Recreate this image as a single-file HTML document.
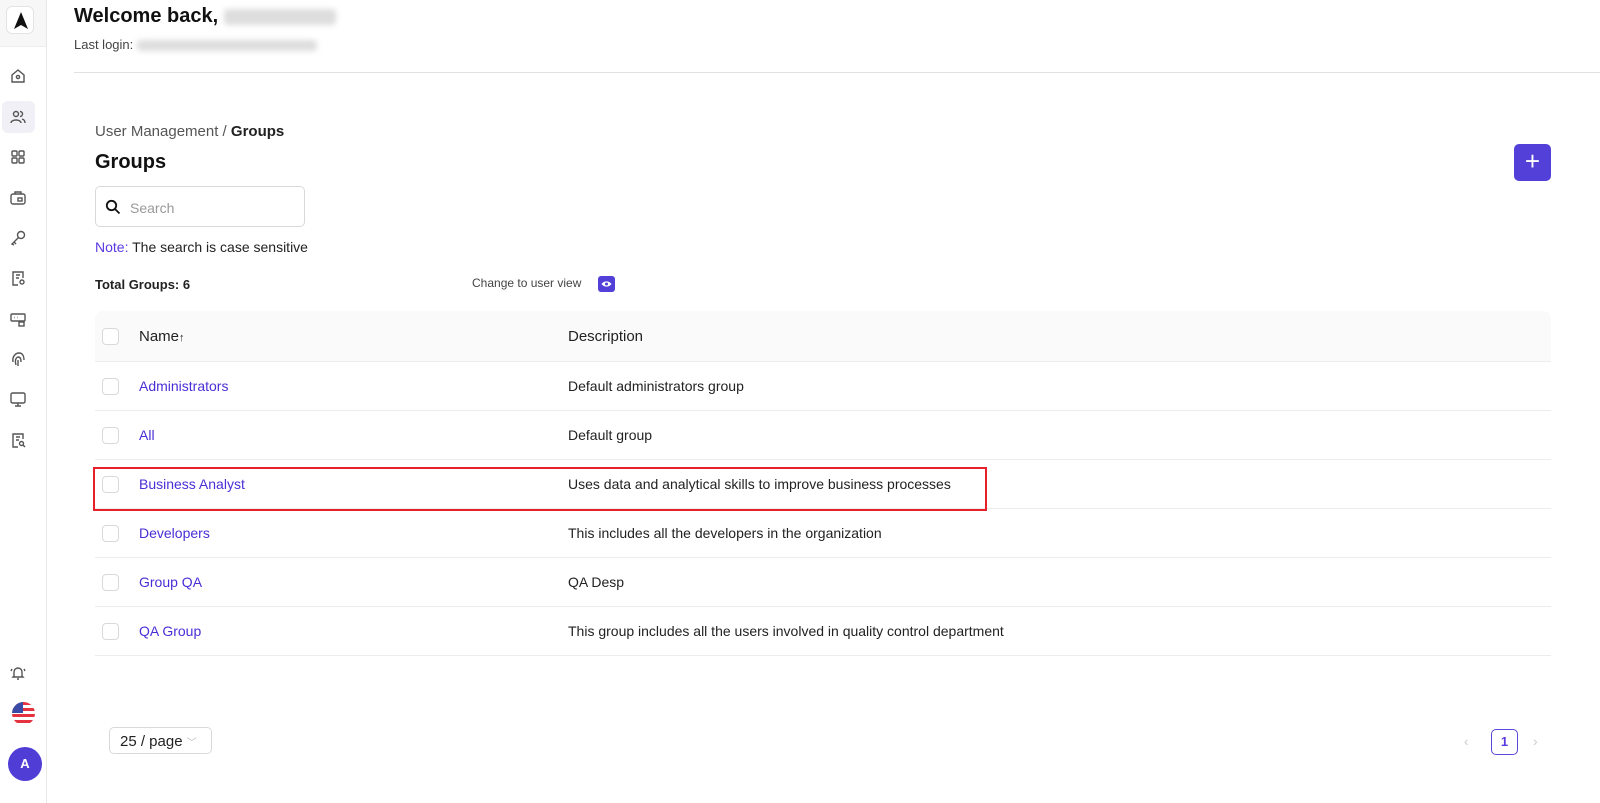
<!DOCTYPE html>
<html><head><meta charset="utf-8"><style>
*{box-sizing:border-box;margin:0;padding:0}
body{width:1600px;height:803px;background:#fff;font-family:"Liberation Sans",Arial,sans-serif;color:#1f1f1f;position:relative;overflow:hidden}
.side{position:absolute;left:0;top:0;width:47px;height:803px;border-right:1px solid #e8e8e8;background:#fff}
.logo{position:absolute;left:0;top:0;width:46px;height:47px;background:#f7f7f7;border-bottom:1px solid #eee}
.logo div{position:absolute;left:6px;top:6px;width:28px;height:28px;background:#fff;border:1px solid #e4e4e4;border-radius:6px}
.ic{position:absolute;left:9px;width:18px;height:18px}
.ic svg{width:18px;height:18px;stroke:#555;fill:none;stroke-width:1.4}
.act{position:absolute;left:2px;top:101px;width:33px;height:32px;background:#f0f0f6;border-radius:6px}
.abs{position:absolute}
.blur{display:inline-block;background:#ddd;filter:blur(3px);border-radius:4px;vertical-align:middle}
.row{position:absolute;left:95px;width:1456px;height:49px;border-bottom:1px solid #ececec}
.cb{position:absolute;left:7px;width:17px;height:17px;border:1px solid #d9d9d9;border-radius:4px;background:#fff}
.nm{position:absolute;left:44px;font-size:14px;color:#4a2ed6}
.ds{position:absolute;left:473px;font-size:14px;color:#222}
</style></head><body>
<div class="side">
 <div class="logo"><div><svg width="28" height="28" viewBox="0 0 28 28"><path d="M14 5 L21 22 L14 18 L7 22 Z" fill="#111"/></svg></div></div>
 <div class="act"></div>
 <div class="ic" style="top:67px"><svg viewBox="0 0 18 18"><path d="M3 8 L9 3 L15 8 V15 H3 Z"/><circle cx="9" cy="10" r="1.6"/></svg></div>
 <div class="ic" style="top:108px"><svg viewBox="0 0 18 18"><circle cx="7" cy="6" r="2.5"/><path d="M2 15 C2 11 12 11 12 15"/><path d="M11 3.5 A2.5 2.5 0 0 1 11 8.5 M13 11 C15 11.5 16 13 16 15"/></svg></div>
 <div class="ic" style="top:148px"><svg viewBox="0 0 18 18"><rect x="3" y="3" width="5" height="5" rx="1"/><rect x="10" y="3" width="5" height="5" rx="1"/><rect x="3" y="10" width="5" height="5" rx="1"/><rect x="10" y="10" width="5" height="5" rx="1"/></svg></div>
 <div class="ic" style="top:189px"><svg viewBox="0 0 18 18"><rect x="2" y="5" width="14" height="10" rx="2"/><path d="M6 5 V3 H12 V5"/><rect x="9" y="9" width="4" height="3"/></svg></div>
 <div class="ic" style="top:229px"><svg viewBox="0 0 18 18"><circle cx="12" cy="6" r="3.5"/><path d="M9.5 8.5 L3 15 L5 16 M5 13 L7 15"/></svg></div>
 <div class="ic" style="top:269px"><svg viewBox="0 0 18 18"><path d="M14 9 V3 H4 V16 H9"/><path d="M7 6 H11 M7 9 H10"/><circle cx="13" cy="13" r="2"/></svg></div>
 <div class="ic" style="top:310px"><svg viewBox="0 0 18 18"><rect x="2" y="4" width="14" height="7" rx="1"/><rect x="10" y="12" width="5" height="4"/><path d="M5 7.5h.5M8 7.5h.5"/></svg></div>
 <div class="ic" style="top:350px"><svg viewBox="0 0 18 18"><path d="M4 12 C3 6 7 3 10 3 C14 3 15 7 15 10 M7 15 C6 12 6 8 9 7 C12 7 12 10 12 12 M9 16 C9 13 9 11 9 10"/></svg></div>
 <div class="ic" style="top:390px"><svg viewBox="0 0 18 18"><rect x="2" y="3" width="14" height="10" rx="1.5"/><path d="M9 13 V16 M6 16 H12"/></svg></div>
 <div class="ic" style="top:431px"><svg viewBox="0 0 18 18"><path d="M14 8 V3 H4 V16 H9"/><path d="M7 6 H11 M7 9 H10"/><circle cx="12.5" cy="12.5" r="2"/><path d="M14 14 L16 16"/></svg></div>
 <div class="ic" style="top:663px"><svg viewBox="0 0 18 18"><path d="M5 13 V9 A4 4 0 0 1 13 9 V13 L14 14 H4 Z M8 16 H10 M3 6 L2 8 M15 6 L16 8"/></svg></div>
 <div class="abs" style="left:12px;top:702px;width:23px;height:23px;border-radius:50%;overflow:hidden;background:repeating-linear-gradient(#e53240 0 3px,#fff 3px 6px)"><div style="width:11px;height:11px;background:#3b4aa5"></div></div>
 <div class="abs" style="left:8px;top:747px;width:34px;height:34px;border-radius:50%;background:#4f3dd6;color:#fff;font-size:13px;font-weight:bold;text-align:center;line-height:34px">A</div>
</div>

<div class="abs" style="left:74px;top:5px;font-size:20px;font-weight:bold;color:#111">Welcome back, <span class="blur" style="width:112px;height:16px"></span></div>
<div class="abs" style="left:74px;top:37px;font-size:13px;color:#444">Last login: <span class="blur" style="width:180px;height:11px"></span></div>
<div class="abs" style="left:74px;top:72px;width:1526px;height:1px;background:#e2e2e2"></div>

<div class="abs" style="left:95px;top:123px;font-size:15px;color:#555">User Management / <b style="color:#222">Groups</b></div>
<div class="abs" style="left:95px;top:151px;font-size:20px;font-weight:bold;color:#111">Groups</div>
<div class="abs" style="left:1514px;top:144px;width:37px;height:37px;border-radius:5px;background:#5240d8;color:#fff;font-size:26px;text-align:center;line-height:35px">+</div>
<div class="abs" style="left:95px;top:186px;width:210px;height:41px;border:1px solid #d9d9d9;border-radius:5px">
 <svg class="abs" style="left:9px;top:12px" width="16" height="16" viewBox="0 0 16 16"><circle cx="6.5" cy="6.5" r="4.7" fill="none" stroke="#111" stroke-width="1.8"/><path d="M10 10 L14.5 14.5" stroke="#111" stroke-width="1.8"/></svg>
 <span class="abs" style="left:34px;top:13px;font-size:14px;color:#999">Search</span></div>
<div class="abs" style="left:95px;top:239px;font-size:14px;color:#222"><span style="color:#5a3ae0">Note:</span> The search is case sensitive</div>
<div class="abs" style="left:95px;top:277px;font-size:13px;font-weight:bold;color:#222">Total Groups: 6</div>
<div class="abs" style="left:472px;top:276px;font-size:12px;color:#444">Change to user view</div>
<div class="abs" style="left:598px;top:276px;width:17px;height:16px;border-radius:3px;background:#5240d8"><svg width="17" height="16" viewBox="0 0 17 16"><path d="M3.5 8 C6 4.5 11 4.5 13.5 8 C11 11.5 6 11.5 3.5 8Z" fill="#fff"/><circle cx="8.5" cy="8" r="1.5" fill="#5240d8"/></svg></div>

<div class="abs" style="left:95px;top:311px;width:1456px;height:51px;background:#fafafa;border-radius:8px 8px 0 0;border-bottom:1px solid #ececec">
 <div class="cb" style="top:17px"></div>
 <span class="abs" style="left:44px;top:17px;font-size:15px;color:#222">Name<span style="font-size:11px">↑</span></span>
 <span class="abs" style="left:473px;top:17px;font-size:15px;color:#222">Description</span>
</div>
<div class="row" style="top:362px"><div class="cb" style="top:16px"></div><span class="nm" style="top:16px">Administrators</span><span class="ds" style="top:16px">Default administrators group</span></div>
<div class="row" style="top:411px"><div class="cb" style="top:16px"></div><span class="nm" style="top:16px">All</span><span class="ds" style="top:16px">Default group</span></div>
<div class="row" style="top:460px"><div class="cb" style="top:16px"></div><span class="nm" style="top:16px">Business Analyst</span><span class="ds" style="top:16px">Uses data and analytical skills to improve business processes</span></div>
<div class="row" style="top:509px"><div class="cb" style="top:16px"></div><span class="nm" style="top:16px">Developers</span><span class="ds" style="top:16px">This includes all the developers in the organization</span></div>
<div class="row" style="top:558px"><div class="cb" style="top:16px"></div><span class="nm" style="top:16px">Group QA</span><span class="ds" style="top:16px">QA Desp</span></div>
<div class="row" style="top:607px"><div class="cb" style="top:16px"></div><span class="nm" style="top:16px">QA Group</span><span class="ds" style="top:16px">This group includes all the users involved in quality control department</span></div>
<div class="abs" style="left:93px;top:467px;width:894px;height:44px;border:2px solid #e8202a"></div>

<div class="abs" style="left:109px;top:727px;width:103px;height:27px;border:1px solid #d9d9d9;border-radius:5px;font-size:15px;color:#222;padding:5px 0 0 10px">25 / page <span style="color:#bbb;font-size:10px">﹀</span></div>
<div class="abs" style="left:1464px;top:733px;color:#ccc;font-size:14px">‹</div>
<div class="abs" style="left:1491px;top:729px;width:27px;height:26px;border:1px solid #5a48d8;border-radius:5px;text-align:center;line-height:24px;font-size:13px;font-weight:bold;color:#5a3ae0">1</div>
<div class="abs" style="left:1533px;top:733px;color:#ccc;font-size:14px">›</div>
</body></html>
